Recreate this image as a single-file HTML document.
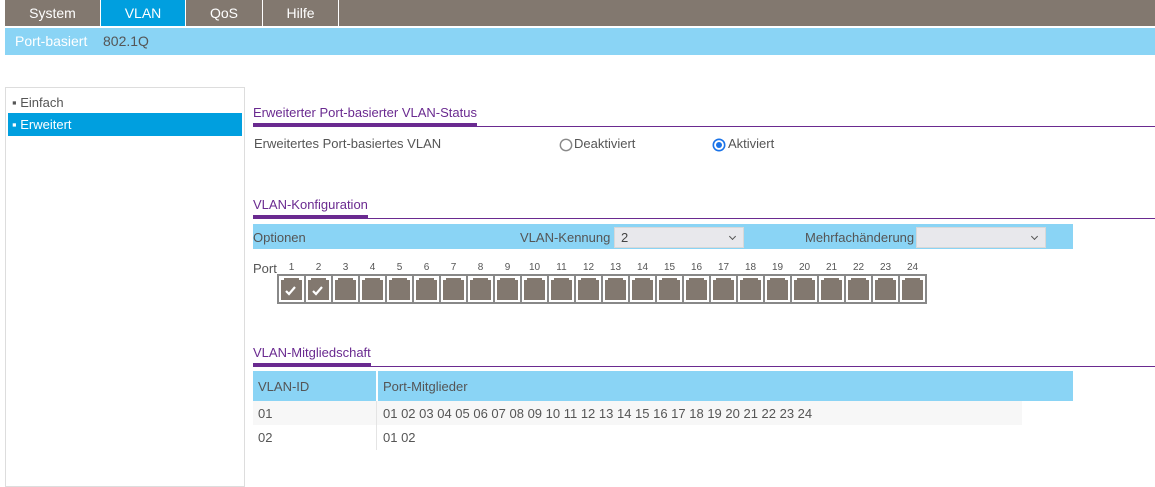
<!DOCTYPE html>
<html><head><meta charset="utf-8"><style>
*{margin:0;padding:0;box-sizing:border-box}
body{width:1155px;height:467px;background:#fff;font-family:"Liberation Sans",Arial,sans-serif;font-size:13px;color:#555;position:relative;overflow:hidden}
.a{position:absolute}
.nav{left:5px;top:0;width:1150px;height:26px;background:#82786f}
.tab{top:0;height:26px;color:#fff;font-size:14px;text-align:center;line-height:26px;border-right:1px solid #fff}
.sub{left:5px;top:28px;width:1150px;height:27px;background:#8ad4f5;font-size:14px;line-height:27px}
.side{left:5px;top:87px;width:240px;height:400px;border:1px solid #ddd}
.tt{color:#6a2a90;font-size:13px}
.thick{height:3px;background:#6a2a90}
.thin{height:1px;background:#6a2a90}
.sel{background:#e8e8ec;border:1px solid #d8d8d8;height:21px;color:#444;padding-left:6px;line-height:19px}
.sel:after{content:"";position:absolute;right:8px;top:6px;width:4px;height:4px;border-right:1px solid #555;border-bottom:1px solid #555;transform:rotate(45deg)}
.pn{top:262px;font-size:10px;width:27px;text-align:center;color:#555}
</style></head><body>
<div class="a nav"></div>
<div class="a tab" style="left:5px;width:96px">System</div>
<div class="a tab" style="left:101px;width:85px;background:#009fdf">VLAN</div>
<div class="a tab" style="left:186px;width:77px">QoS</div>
<div class="a tab" style="left:263px;width:76px">Hilfe</div>
<div class="a sub"><span class="a" style="left:10px;color:#fff">Port-basiert</span><span class="a" style="left:98px;color:#555">802.1Q</span></div>

<div class="a side"></div>
<div class="a" style="left:12px;top:95px;font-size:13px">▪ Einfach</div>
<div class="a" style="left:8px;top:113px;width:234px;height:23px;background:#009fdf;color:#fff;line-height:23px;padding-left:4px">▪ Erweitert</div>

<div class="a tt" style="left:253px;top:105px">Erweiterter Port-basierter VLAN-Status</div>
<div class="a thin" style="left:253px;top:126px;width:902px"></div>
<div class="a thick" style="left:253px;top:123px;width:224px"></div>
<div class="a" style="left:254px;top:136px">Erweitertes Port-basiertes VLAN</div>
<svg class="a" style="left:559px;top:138px" width="14" height="14"><circle cx="7" cy="7" r="5.7" fill="#fff" stroke="#888" stroke-width="1.4"/></svg>
<div class="a" style="left:574px;top:136px">Deaktiviert</div>
<svg class="a" style="left:712px;top:138px" width="14" height="14"><circle cx="7" cy="7" r="5.7" fill="#fff" stroke="#1a73e8" stroke-width="1.6"/><circle cx="7" cy="7" r="3" fill="#1a73e8"/></svg>
<div class="a" style="left:728px;top:136px">Aktiviert</div>

<div class="a tt" style="left:253px;top:197px">VLAN-Konfiguration</div>
<div class="a thin" style="left:253px;top:218px;width:902px"></div>
<div class="a thick" style="left:253px;top:215px;width:115px"></div>
<div class="a" style="left:253px;top:224px;width:820px;height:25px;background:#8ad4f5"></div>
<div class="a" style="left:253px;top:230px;font-size:13px">Optionen</div>
<div class="a" style="left:520px;top:230px;font-size:13px">VLAN-Kennung</div>
<div class="a sel" style="left:614px;top:227px;width:130px">2</div>
<div class="a" style="left:805px;top:230px;font-size:13px">Mehrfachänderung</div>
<div class="a sel" style="left:916px;top:227px;width:130px"></div>

<div class="a" style="left:253px;top:261px">Port</div>
<div class="a" style="left:277px;top:274px;width:650px;height:30px;border:1px solid #888"></div>
<svg class="a" style="left:278px;top:275px" width="648" height="28">
<defs><g id="p"><rect x="0.5" y="0.5" width="26" height="27" fill="#fff" stroke="#888"/><path d="M3 3h21v22h-21z" fill="#82786f"/><path d="M3 3h3v2h-3zM21 3h3v2h-3z" fill="#fff"/></g></defs>
<use href="#p" x="0"/><use href="#p" x="27"/><use href="#p" x="54"/><use href="#p" x="81"/><use href="#p" x="108"/><use href="#p" x="135"/><use href="#p" x="162"/><use href="#p" x="189"/><use href="#p" x="216"/><use href="#p" x="243"/><use href="#p" x="270"/><use href="#p" x="297"/><use href="#p" x="324"/><use href="#p" x="351"/><use href="#p" x="378"/><use href="#p" x="405"/><use href="#p" x="432"/><use href="#p" x="459"/><use href="#p" x="486"/><use href="#p" x="513"/><use href="#p" x="540"/><use href="#p" x="567"/><use href="#p" x="594"/><use href="#p" x="621"/>
<path d="M8 16l3 3l6-7" stroke="#fff" stroke-width="2.2" fill="none"/><path d="M35 16l3 3l6-7" stroke="#fff" stroke-width="2.2" fill="none"/>
</svg>
<div class="a pn" style="left:278px">1</div><div class="a pn" style="left:305px">2</div><div class="a pn" style="left:332px">3</div><div class="a pn" style="left:359px">4</div><div class="a pn" style="left:386px">5</div><div class="a pn" style="left:413px">6</div><div class="a pn" style="left:440px">7</div><div class="a pn" style="left:467px">8</div><div class="a pn" style="left:494px">9</div><div class="a pn" style="left:521px">10</div><div class="a pn" style="left:548px">11</div><div class="a pn" style="left:575px">12</div><div class="a pn" style="left:602px">13</div><div class="a pn" style="left:629px">14</div><div class="a pn" style="left:656px">15</div><div class="a pn" style="left:683px">16</div><div class="a pn" style="left:710px">17</div><div class="a pn" style="left:737px">18</div><div class="a pn" style="left:764px">19</div><div class="a pn" style="left:791px">20</div><div class="a pn" style="left:818px">21</div><div class="a pn" style="left:845px">22</div><div class="a pn" style="left:872px">23</div><div class="a pn" style="left:899px">24</div>

<div class="a tt" style="left:253px;top:345px">VLAN-Mitgliedschaft</div>
<div class="a thin" style="left:253px;top:366px;width:902px"></div>
<div class="a thick" style="left:253px;top:363px;width:118px"></div>
<div class="a" style="left:253px;top:371px;width:820px;height:30px;background:#8ad4f5"></div>
<div class="a" style="left:376px;top:371px;width:1px;height:79px;background:#e4e4e4"></div>
<div class="a" style="left:376px;top:371px;width:2px;height:30px;background:#fff"></div>
<div class="a" style="left:253px;top:401px;width:769px;height:24px;background:#f7f7f7"></div>
<div class="a" style="left:376px;top:401px;width:1px;height:49px;background:#e4e4e4"></div>
<div class="a" style="left:258px;top:379px">VLAN-ID</div>
<div class="a" style="left:383px;top:379px">Port-Mitglieder</div>
<div class="a" style="left:258px;top:406px">01</div>
<div class="a" style="left:383px;top:406px">01 02 03 04 05 06 07 08 09 10 11 12 13 14 15 16 17 18 19 20 21 22 23 24</div>
<div class="a" style="left:258px;top:430px">02</div>
<div class="a" style="left:383px;top:430px">01 02</div>
</body></html>
